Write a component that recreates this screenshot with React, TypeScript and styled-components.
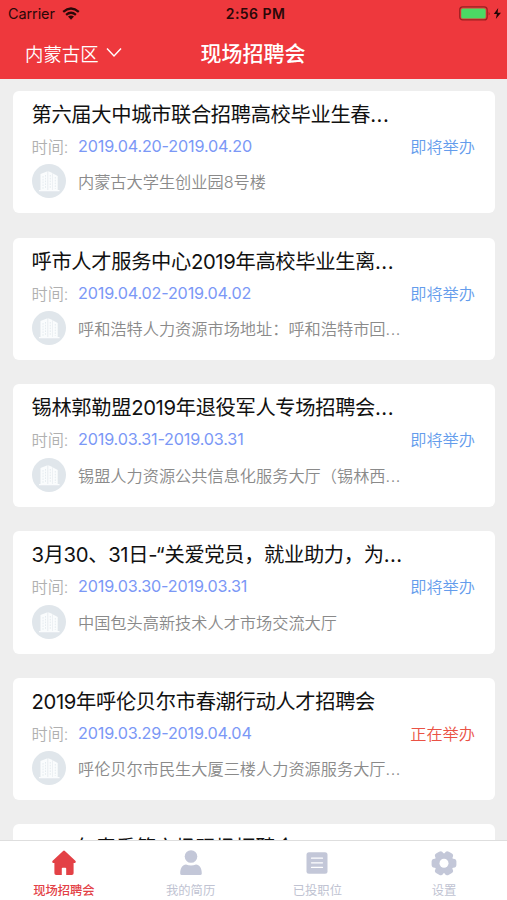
import React from "react";
import styled, { createGlobalStyle } from "styled-components";

const Global = createGlobalStyle`
  * { box-sizing: border-box; }
  body { margin: 0; background: #eeeeee; font-family: Inter, "Noto Sans CJK SC", sans-serif; }
`;

const Screen = styled.div`
  width: 507px;
  height: 900px;
  display: flex;
  flex-direction: column;
  overflow: hidden;
  background: #eeeeee;
`;

const Header = styled.header`
  height: 79.3px;
  flex: none;
  background: #ee383d;
`;

const StatusBar = styled.div`
  height: 27px;
  display: grid;
  grid-template-columns: 1fr auto 1fr;
  align-items: center;
  padding: 0 6px 0 8px;
  font-size: 14.5px;
  color: #2a0808;
`;

const Carrier = styled.div`
  display: flex;
  align-items: center;
  gap: 7px;
  letter-spacing: -0.1px;
`;

const Clock = styled.div`
  padding-left: 2px;
  font-weight: 600;
  font-size: 14px;
  letter-spacing: 0.45px;
`;

const Power = styled.div`
  display: flex;
  justify-content: flex-end;
  margin-right: -2px;
`;

const NavBar = styled.div`
  height: 50px;
  display: grid;
  grid-template-columns: 1fr auto 1fr;
  align-items: center;
  padding: 0 26px 0 25px;
  color: #fff;
`;

const Region = styled.div`
  display: flex;
  align-items: center;
  gap: 7px;
  padding-top: 1px;
  font-size: 18.4px;
  font-weight: 350;
`;

const NavTitle = styled.h1`
  margin: 0;
  font-size: 21px;
  font-weight: 500;
`;

const List = styled.main`
  flex: 1;
  min-height: 0;
  overflow: hidden;
  display: flex;
  flex-direction: column;
  gap: 24.2px;
  padding: 11.7px 12.5px 0 13px;
`;

const Card = styled.article`
  flex: none;
  height: 122.5px;
  border-radius: 6px;
  background: #fff;
  padding: 9px 19.5px 0 18.5px;
`;

const Title = styled.h2`
  margin: 0;
  height: 30px;
  line-height: 30px;
  font-size: 20.28px;
  font-weight: 400;
  letter-spacing: -0.34px;
  color: #111;
  white-space: nowrap;
`;

const Ellipsis = styled.span`
  letter-spacing: 0.5px;
`;

const InfoRow = styled.div<{ $height: number }>`
  height: ${(p) => p.$height}px;
  display: flex;
  align-items: center;
  font-size: 16.2px;
  white-space: nowrap;
`;

const Label = styled.span`
  width: 46.5px;
  color: #b0b0b0;
  font-weight: 350;
`;

const Dates = styled.span`
  flex: 1;
  color: #7b98f6;
  letter-spacing: -0.18px;
`;

const Status = styled.span<{ $active?: boolean }>`
  color: ${(p) => (p.$active ? "#ea5245" : "#649cec")};
  font-weight: 350;
`;

const Place = styled.span`
  margin-left: 12.5px;
  color: #8a8a8a;
  font-weight: 350;
`;

const TabBar = styled.nav`
  height: 60px;
  flex: none;
  display: grid;
  grid-template-columns: repeat(4, 1fr);
  background: #fff;
  border-top: 1px solid #dedede;
`;

const Tab = styled.div<{ $active?: boolean }>`
  display: flex;
  flex-direction: column;
  align-items: center;
  padding: 9px 0 0 1px;
  font-size: 12.3px;
  font-weight: ${(p) => (p.$active ? 500 : 400)};
  color: ${(p) => (p.$active ? "#e34146" : "#c0c3d2")};
`;

const TabName = styled.span`
  margin-top: 5px;
  line-height: 18px;
`;

const WifiIcon = () => (
  <svg width="18" height="13" viewBox="0 0 18 13" fill="none" stroke="#2a0808" strokeWidth="2.3">
    <path d="M1.2 4.8Q9 -1.8 16.8 4.8" />
    <path d="M4.1 7.8Q9 3.7 13.9 7.8" />
    <path d="M6 9.6Q9 7.4 12 9.6L9 12.7Z" fill="#2a0808" stroke="none" />
  </svg>
);

const BatteryIcon = () => (
  <svg width="44" height="15" viewBox="0 0 44 15">
    <rect x="0.7" y="0.9" width="27.5" height="13" rx="3" fill="none" stroke="#9b2022" strokeWidth="1.2" />
    <rect x="2.2" y="2.4" width="24.5" height="10" rx="1.5" fill="#4cd964" />
    <path d="M29.7 5.5q1.7 2 0 4z" fill="#9b2022" />
    <path d="M39.2 2L34.8 8.1h3.1L36.8 13 42 6.7h-3.4z" fill="#200606" />
  </svg>
);

const ChevronIcon = () => (
  <svg width="16" height="11" viewBox="0 0 16 11" fill="none" stroke="#fff" strokeWidth="1.4">
    <path d="M1 1.5L8 9L15 1.5" />
  </svg>
);

const BuildingIcon = () => (
  <svg width="34" height="34" viewBox="0 0 34 34">
    <circle cx="17" cy="17" r="17" fill="#e0e6eb" />
    <path d="M8.5 10L15.5 7.3V26h-7zM16.2 7.3L20.5 9V26h-4.3zM21 9.5l4.7 2.5V26H21zM7 26h20.5v1.2H7z" fill="#fafcfd" />
    <path d="M11 12v13M13.5 11v14M18.3 11v14M23.3 13v12" stroke="#dfe7ec" strokeWidth="0.8" strokeDasharray="1.6 1.2" />
  </svg>
);

const HomeIcon = () => (
  <svg width="26" height="27" viewBox="0 0 26 27">
    <path d="M12.1.9Q13 .2 13.9.9L24.6 11Q25.5 12.8 23.8 12.9H22.6V23.2Q22.6 25 20.8 25H15.2V18.5Q15.2 17.7 14.4 17.7H11.6Q10.8 17.7 10.8 18.5V25H5.2Q3.4 25 3.4 23.2V12.9H2.2Q.5 12.8 1.4 11Z" fill="#e34146" />
  </svg>
);

const PersonIcon = () => (
  <svg width="24" height="27" viewBox="0 0 24 27" fill="#c3c7d8">
    <circle cx="12" cy="6.5" r="6.3" />
    <path d="M1.2 23.5C1.2 17.5 3.6 14.8 7 14.4Q12 16.5 17 14.4C20.4 14.8 22.8 17.5 22.8 23.5Q22.7 25.1 21.2 25.1H2.8Q1.3 25.1 1.2 23.5Z" />
  </svg>
);

const DocumentIcon = () => (
  <svg width="22" height="27" viewBox="0 0 22 27">
    <rect x="0.5" y="2.3" width="21" height="21.5" rx="2.5" fill="#c3c7d8" />
    <path d="M5.5 8.2h11M5.5 12.8h11M5.5 17.4h11" stroke="#fff" strokeWidth="1.3" strokeLinecap="round" />
  </svg>
);

const GearIcon = () => (
  <svg width="26" height="27" viewBox="0 0 26 27">
    <g fill="#c3c7d8">
      <circle cx="13" cy="13.3" r="10" />
      {[0, 60, 120].map((a) => (
        <rect key={a} x="0.6" y="8.8" width="24.8" height="9" rx="3" transform={`rotate(${a} 13 13.3)`} />
      ))}
    </g>
    <circle cx="13" cy="13.3" r="4.5" fill="#fff" />
  </svg>
);

const fairs = [
  { title: "第六届大中城市联合招聘高校毕业生春", cut: true, dates: "2019.04.20-2019.04.20", place: "内蒙古大学生创业园8号楼" },
  { title: "呼市人才服务中心2019年高校毕业生离", cut: true, dates: "2019.04.02-2019.04.02", place: "呼和浩特人力资源市场地址：呼和浩特市回", placeCut: true },
  { title: "锡林郭勒盟2019年退役军人专场招聘会", cut: true, dates: "2019.03.31-2019.03.31", place: "锡盟人力资源公共信息化服务大厅（锡林西", placeCut: true },
  { title: "3月30、31日-“关爱党员，就业助力，为", cut: true, dates: "2019.03.30-2019.03.31", place: "中国包头高新技术人才市场交流大厅" },
  { title: "2019年呼伦贝尔市春潮行动人才招聘会", dates: "2019.03.29-2019.04.04", place: "呼伦贝尔市民生大厦三楼人力资源服务大厅", placeCut: true, active: true },
];

const nextFair = "2019年春季第六场现场招聘会";

const tabs = [
  { name: "现场招聘会", Icon: HomeIcon, active: true },
  { name: "我的简历", Icon: PersonIcon },
  { name: "已投职位", Icon: DocumentIcon },
  { name: "设置", Icon: GearIcon },
];

export default function App() {
  return (
    <Screen>
      <Global />
      <Header>
        <StatusBar>
          <Carrier>Carrier<WifiIcon /></Carrier>
          <Clock>2:56 PM</Clock>
          <Power><BatteryIcon /></Power>
        </StatusBar>
        <NavBar>
          <Region>内蒙古区<ChevronIcon /></Region>
          <NavTitle>现场招聘会</NavTitle>
        </NavBar>
      </Header>
      <List>
        {fairs.map((f) => (
          <Card key={f.title}>
            <Title>{f.title}{f.cut && <Ellipsis>...</Ellipsis>}</Title>
            <InfoRow $height={32}>
              <Label>时间:</Label>
              <Dates>{f.dates}</Dates>
              <Status $active={f.active}>{f.active ? "正在举办" : "即将举办"}</Status>
            </InfoRow>
            <InfoRow $height={39}>
              <BuildingIcon />
              <Place>{f.place}{f.placeCut && <Ellipsis>...</Ellipsis>}</Place>
            </InfoRow>
          </Card>
        ))}
        <Card>
          <Title>{nextFair}</Title>
        </Card>
      </List>
      <TabBar>
        {tabs.map(({ name, Icon, active }) => (
          <Tab key={name} $active={active}><Icon /><TabName>{name}</TabName></Tab>
        ))}
      </TabBar>
    </Screen>
  );
}
